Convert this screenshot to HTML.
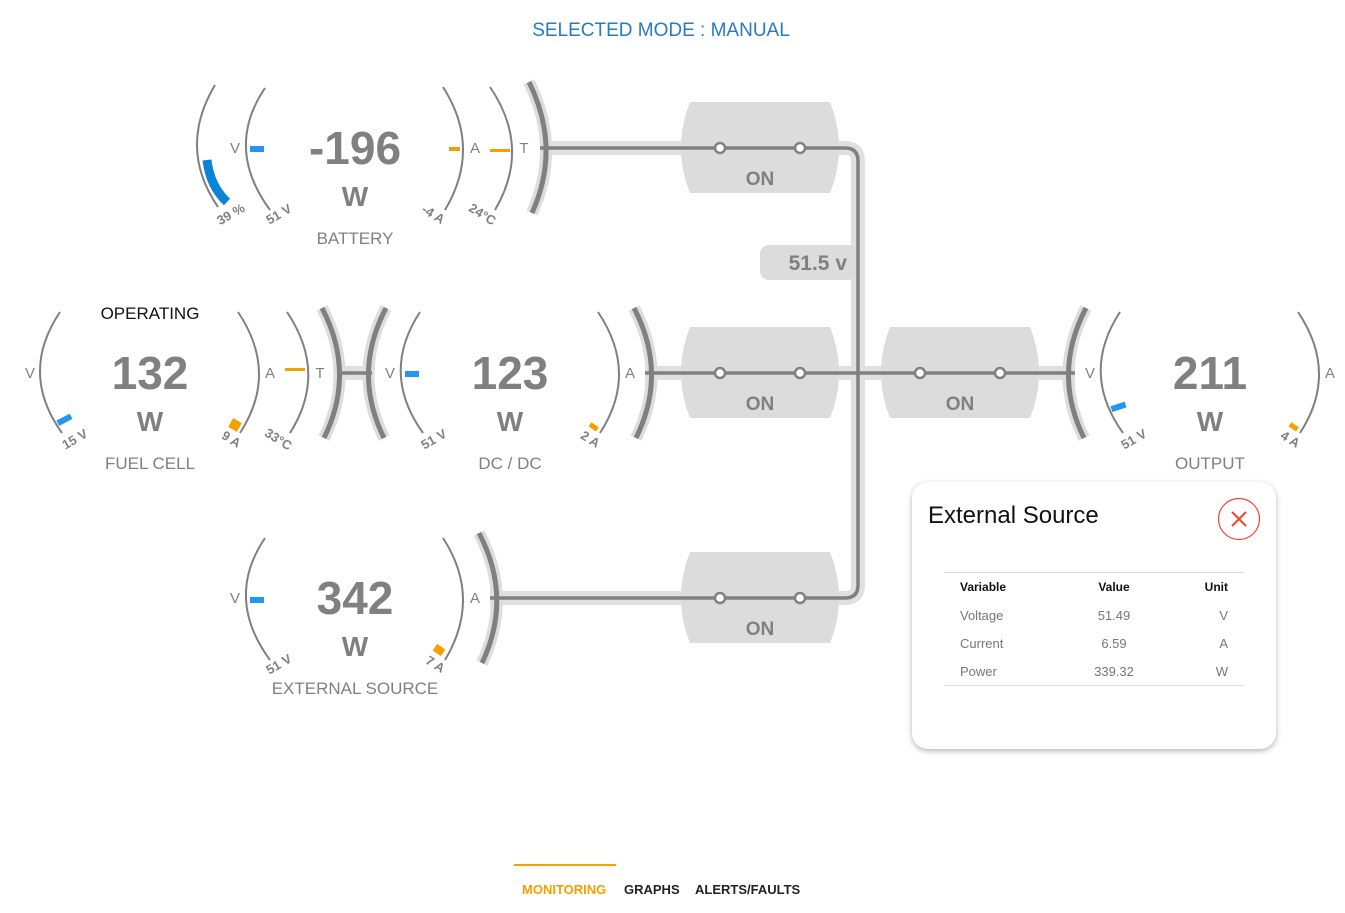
<!DOCTYPE html>
<html><head><meta charset="utf-8"><style>
html,body{margin:0;padding:0;background:#fff;width:1345px;height:913px;overflow:hidden;font-family:"Liberation Sans",sans-serif}
svg{position:absolute;left:0;top:0}
.pop{position:absolute;left:912px;top:482px;width:364px;height:267px;border-radius:16px;background:#fff;box-shadow:0 2px 6px rgba(0,0,0,.3)}
</style></head><body>
<svg width="1345" height="913" viewBox="0 0 1345 913" font-family="Liberation Sans, sans-serif">
<text x="661" y="36" text-anchor="middle" font-size="19" fill="#2a7ac0">SELECTED MODE : MANUAL</text>

<!-- bus halo -->
<g fill="none" stroke="#e0e0e0" stroke-width="14">
<path d="M540 148 H845 Q858 148 858 161 V585 Q858 598 845 598 H490"/>
<path d="M645 373 H1075"/>
<path d="M338 373 H372"/>
</g>
<!-- thick bar halos -->
<g fill="none" stroke="#dddddd" stroke-width="12">
<path d="M529 82 Q561.5 148 532 213"/>
<path d="M322 308 Q356 373 324 438"/>
<path d="M386 308 Q352 373 384 438"/>
<path d="M634 308 Q668 373 636 438"/>
<path d="M1086 308 Q1052 373 1084 438"/>
<path d="M479 533 Q513 598 482 663"/>
</g>
<!-- switches -->
<g fill="#dcdcdc">
<path d="M690 102 H830 Q848 148 830 193 H690 Q672 148 690 102Z"/>
<path d="M690 327 H830 Q848 373 830 418 H690 Q672 373 690 327Z"/>
<path d="M890 327 H1030 Q1048 373 1030 418 H890 Q872 373 890 327Z"/>
<path d="M690 552 H830 Q848 598 830 643 H690 Q672 598 690 552Z"/>
<rect x="760" y="245" width="100" height="35" rx="9"/>
</g>
<!-- lines -->
<g fill="none" stroke="#808080" stroke-width="3.5">
<path d="M540 148 H845 Q858 148 858 161 V585 Q858 598 845 598 H490"/>
<path d="M645 373 H1075"/>
<path d="M338 373 H372"/>
</g>
<g fill="#fff" stroke="#808080" stroke-width="2.5">
<circle cx="720" cy="148" r="5"/><circle cx="800" cy="148" r="5"/>
<circle cx="720" cy="373" r="5"/><circle cx="800" cy="373" r="5"/>
<circle cx="920" cy="373" r="5"/><circle cx="1000" cy="373" r="5"/>
<circle cx="720" cy="598" r="5"/><circle cx="800" cy="598" r="5"/>
</g>
<g font-size="19" font-weight="bold" fill="#808080" text-anchor="middle">
<text x="760" y="185">ON</text><text x="760" y="410">ON</text><text x="960" y="410">ON</text><text x="760" y="635">ON</text>
</g>
<text x="847" y="270" text-anchor="end" font-size="21" font-weight="bold" fill="#808080">51.5 v</text>

<!-- thick bars -->
<g fill="none" stroke="#808080" stroke-width="5">
<path d="M529 82 Q561.5 148 532 213"/>
<path d="M322 308 Q356 373 324 438"/>
<path d="M386 308 Q352 373 384 438"/>
<path d="M634 308 Q668 373 636 438"/>
<path d="M1086 308 Q1052 373 1084 438"/>
<path d="M479 533 Q513 598 482 663"/>
</g>
<!-- thin arcs -->
<g fill="none" stroke="#808080" stroke-width="2">
<path d="M215 85 Q177.5 148 218 207"/>
<path d="M265 88 Q224.5 148 270 210"/>
<path d="M443 87 Q482 148 445 210"/>
<path d="M490 87 Q531.5 148 495 210"/>
<path d="M60 312 Q19 373 62 433"/>
<path d="M238 312 Q279 373 240 433"/>
<path d="M287 312 Q328 373 290 433"/>
<path d="M420 312 Q380 373 423 433"/>
<path d="M598 312 Q639 373 600 433"/>
<path d="M1120 312 Q1080 373 1123 433"/>
<path d="M1298 312 Q1339 373 1300 433"/>
<path d="M265 538 Q224.5 598 270 660"/>
<path d="M443 538 Q482 598 445 660"/>
</g>
<!-- indicator ticks -->
<path d="M207 160 Q210 186 227 202" fill="none" stroke="#0a84d6" stroke-width="9"/>
<g fill="#2196f3">
<rect x="250" y="146" width="14" height="6"/>
<rect x="405" y="371" width="14" height="6"/>
<rect x="250" y="597" width="14" height="6"/>
<rect x="57" y="417" width="15" height="6" transform="rotate(-28 64 420)"/>
<rect x="1111" y="404" width="15" height="6" transform="rotate(-18 1118 407)"/>
</g>
<g fill="#f5a000">
<rect x="449" y="147" width="11" height="4"/>
<rect x="490" y="149" width="20" height="3"/>
<rect x="285" y="368" width="20" height="3"/>
<rect x="230" y="420" width="10" height="10" transform="rotate(30 235 425)"/>
<rect x="589" y="424" width="9" height="5" transform="rotate(35 593 427)"/>
<rect x="1289" y="424" width="9" height="5" transform="rotate(35 1293 427)"/>
<rect x="434" y="646" width="10" height="8" transform="rotate(35 439 650)"/>
</g>
<!-- small letters -->
<g font-size="15" fill="#808080" text-anchor="middle">
<text x="235" y="153">V</text><text x="475" y="153">A</text><text x="524" y="153">T</text>
<text x="30" y="378">V</text><text x="270" y="378">A</text><text x="320" y="378">T</text>
<text x="390" y="378">V</text><text x="630" y="378">A</text>
<text x="1090" y="378">V</text><text x="1330" y="378">A</text>
<text x="235" y="603">V</text><text x="475" y="603">A</text>
</g>
<!-- rotated labels -->
<g font-size="13" font-weight="bold" fill="#808080" text-anchor="middle">
<text transform="translate(233,218) rotate(-30)">39 %</text>
<text transform="translate(281,218) rotate(-30)">51 V</text>
<text transform="translate(431,218) rotate(32)">-4 A</text>
<text transform="translate(480,218) rotate(32)">24°C</text>
<text transform="translate(77,443) rotate(-30)">15 V</text>
<text transform="translate(229,443) rotate(32)">9 A</text>
<text transform="translate(276,443) rotate(32)">33°C</text>
<text transform="translate(436,443) rotate(-30)">51 V</text>
<text transform="translate(588,443) rotate(32)">2 A</text>
<text transform="translate(1136,443) rotate(-30)">51 V</text>
<text transform="translate(1288,443) rotate(32)">4 A</text>
<text transform="translate(281,668) rotate(-30)">51 V</text>
<text transform="translate(433,668) rotate(32)">7 A</text>
</g>
<!-- big values -->
<g font-weight="bold" fill="#808080" text-anchor="middle">
<text x="355" y="164" font-size="46">-196</text><text x="355" y="206" font-size="28">W</text>
<text x="150" y="389" font-size="46">132</text><text x="150" y="431" font-size="28">W</text>
<text x="510" y="389" font-size="46">123</text><text x="510" y="431" font-size="28">W</text>
<text x="1210" y="389" font-size="46">211</text><text x="1210" y="431" font-size="28">W</text>
<text x="355" y="614" font-size="46">342</text><text x="355" y="656" font-size="28">W</text>
</g>
<g font-size="17" fill="#808080" text-anchor="middle">
<text x="355" y="244">BATTERY</text>
<text x="150" y="469">FUEL CELL</text>
<text x="510" y="469">DC / DC</text>
<text x="1210" y="469">OUTPUT</text>
<text x="355" y="694">EXTERNAL SOURCE</text>
</g>
<text x="150" y="319" font-size="17" fill="#111" text-anchor="middle">OPERATING</text>

<!-- tabs -->
<rect x="514" y="864" width="102" height="2" fill="#f5a000"/>
<g font-size="13" font-weight="bold">
<text x="522" y="894" fill="#f5a000">MONITORING</text>
<text x="624" y="894" fill="#222">GRAPHS</text>
<text x="695" y="894" fill="#222">ALERTS/FAULTS</text>
</g>
</svg>
<div class="pop">
<svg width="364" height="267" viewBox="0 0 364 267" font-family="Liberation Sans, sans-serif">
<text x="16" y="41" font-size="24" fill="#111">External Source</text>
<circle cx="327" cy="37" r="20.5" fill="none" stroke="#f44336" stroke-width="1.2"/>
<path d="M320 30 L334 44 M334 30 L320 44" stroke="#f44336" stroke-width="2"/>
<line x1="32" y1="90.5" x2="332" y2="90.5" stroke="#ddd"/>
<line x1="32" y1="203.5" x2="332" y2="203.5" stroke="#ddd"/>
<g font-size="12" font-weight="bold" fill="#111">
<text x="48" y="109">Variable</text><text x="202" y="109" text-anchor="middle">Value</text><text x="316" y="109" text-anchor="end">Unit</text>
</g>
<g font-size="13" fill="#777">
<text x="48" y="138">Voltage</text><text x="202" y="138" text-anchor="middle">51.49</text><text x="316" y="138" text-anchor="end">V</text>
<text x="48" y="166">Current</text><text x="202" y="166" text-anchor="middle">6.59</text><text x="316" y="166" text-anchor="end">A</text>
<text x="48" y="194">Power</text><text x="202" y="194" text-anchor="middle">339.32</text><text x="316" y="194" text-anchor="end">W</text>
</g>
</svg>
</div>
</body></html>
